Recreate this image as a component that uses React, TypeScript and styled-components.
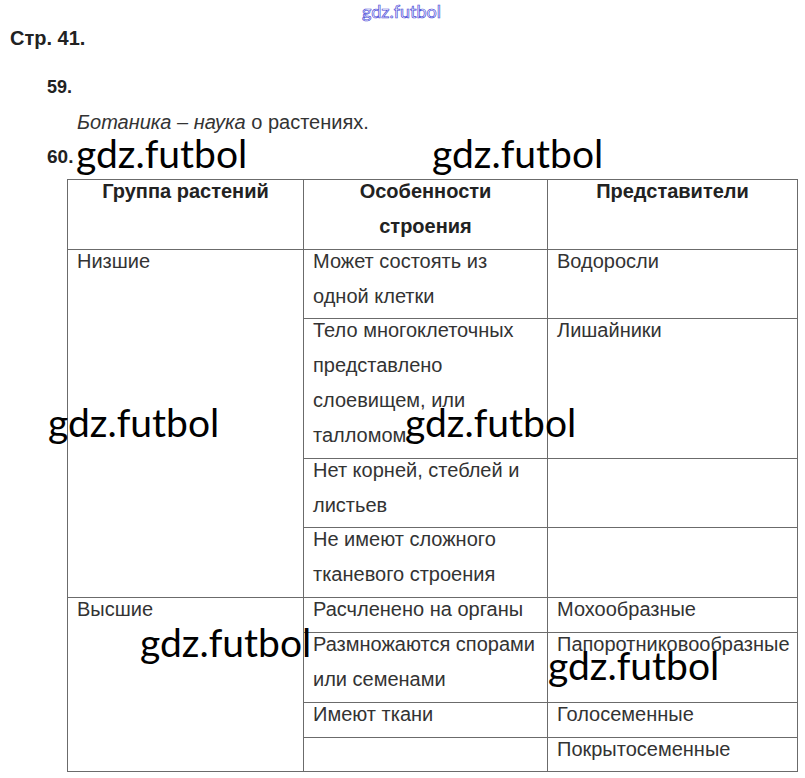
import React from "react";
import styled, { createGlobalStyle } from "styled-components";

const Global = createGlobalStyle`
  html, body { margin: 0; padding: 0; background: #fff; }
  body { font-family: "Liberation Sans", Arial, sans-serif; color: #333; }
`;

const Page = styled.div`
  position: relative;
  width: 805px;
  height: 778px;
  overflow: hidden;
  padding-top: 26px;
  box-sizing: border-box;
`;

const Title = styled.div`
  font-size: 20px;
  font-weight: bold;
  line-height: 24px;
  color: #222;
  padding-left: 10px;
`;

const TaskNum = styled.div<{ $top: number; $size?: number }>`
  font-size: ${(p) => p.$size ?? 18}px;
  font-weight: bold;
  line-height: 24px;
  color: #222;
  padding-left: 47px;
  margin-top: ${(p) => p.$top}px;
`;

const Answer = styled.p`
  margin: 11px 0 0;
  padding-left: 77px;
  font-size: 20px;
  line-height: 24px;
  color: #333;
  em { font-style: italic; }
`;

const Table = styled.table`
  margin: 10px 0 0 67px;
  border-collapse: collapse;
  table-layout: fixed;
  width: 731px;
  font-size: 20px;
`;

const HeadCell = styled.th`
  border: 1px solid #6b6b6b;
  padding: 0 9px;
  vertical-align: top;
  text-align: center;
  font-weight: bold;
  color: #222;
  white-space: nowrap;
`;

const Cell = styled.td`
  border: 1px solid #6b6b6b;
  padding: 0 9px;
  vertical-align: top;
  text-align: left;
  color: #333;
  white-space: nowrap;
`;

const Lines = styled.div`
  line-height: 34.85px;
  margin: -6px 0 5px;
  min-height: 34.85px;
`;

const Mark = styled.div<{ $x: number; $y: number }>`
  position: absolute;
  left: ${(p) => p.$x}px;
  top: ${(p) => p.$y}px;
  font-family: Lato, "Open Sans", sans-serif;
  font-size: 39px;
  line-height: 1;
  color: #000;
  white-space: nowrap;
  pointer-events: none;
`;

const TopMark = styled.div`
  position: absolute;
  left: 362px;
  top: 1px;
  font-family: Lato, sans-serif;
  font-size: 18px;
  line-height: 20px;
  color: #fff;
  -webkit-text-stroke: 0.7px #4848d8;
  white-space: nowrap;
`;

const T = ({ children }: { children?: React.ReactNode }) => <Lines>{children}</Lines>;

const marks: [number, number][] = [
  [76, 134],
  [432, 134],
  [48, 403],
  [405, 403],
  [140, 623],
  [548, 646],
];

export default function App() {
  return (
    <>
      <Global />
      <Page>
        <TopMark>gdz.futbol</TopMark>
        <Title>Стр. 41.</Title>
        <TaskNum $top={25}>59.</TaskNum>
        <Answer>
          <em>Ботаника – наука</em> о растениях.
        </Answer>
        <TaskNum $top={11} $size={19}>60.</TaskNum>
        <Table>
          <colgroup>
            <col style={{ width: 236 }} />
            <col style={{ width: 244 }} />
            <col style={{ width: 250 }} />
          </colgroup>
          <thead>
            <tr>
              <HeadCell><T>Группа растений</T></HeadCell>
              <HeadCell><T>Особенности<br />строения</T></HeadCell>
              <HeadCell><T>Представители</T></HeadCell>
            </tr>
          </thead>
          <tbody>
            <tr>
              <Cell rowSpan={4}><T>Низшие</T></Cell>
              <Cell><T>Может состоять из<br />одной клетки</T></Cell>
              <Cell><T>Водоросли</T></Cell>
            </tr>
            <tr>
              <Cell><T>Тело многоклеточных<br />представлено<br />слоевищем, или<br />талломом</T></Cell>
              <Cell><T>Лишайники</T></Cell>
            </tr>
            <tr>
              <Cell><T>Нет корней, стеблей и<br />листьев</T></Cell>
              <Cell><T /></Cell>
            </tr>
            <tr>
              <Cell><T>Не имеют сложного<br />тканевого строения</T></Cell>
              <Cell><T /></Cell>
            </tr>
            <tr>
              <Cell rowSpan={4}><T>Высшие</T></Cell>
              <Cell><T>Расчленено на органы</T></Cell>
              <Cell><T>Мохообразные</T></Cell>
            </tr>
            <tr>
              <Cell><T>Размножаются спорами<br />или семенами</T></Cell>
              <Cell><T>Папоротниковообразные</T></Cell>
            </tr>
            <tr>
              <Cell><T>Имеют ткани</T></Cell>
              <Cell><T>Голосеменные</T></Cell>
            </tr>
            <tr>
              <Cell><T /></Cell>
              <Cell><T>Покрытосеменные</T></Cell>
            </tr>
          </tbody>
        </Table>
        {marks.map(([x, y], i) => (
          <Mark key={i} $x={x} $y={y}>gdz.futbol</Mark>
        ))}
      </Page>
    </>
  );
}
